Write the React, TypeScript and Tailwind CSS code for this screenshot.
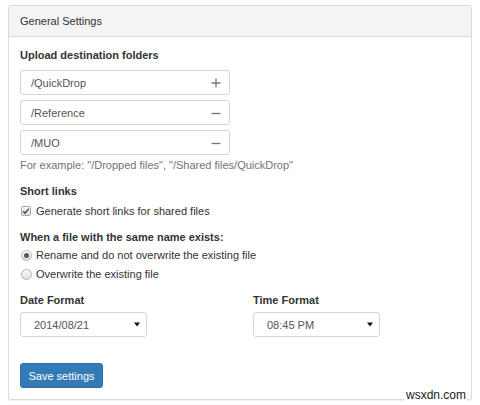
import React from "react";

const font = { fontFamily: '"Liberation Sans", Arial, sans-serif' };

function FolderInput({ value, sign }: { value: string; sign: "+" | "-" }) {
  return (
    <div className="flex h-[25px] w-[210px] items-center justify-between rounded-[3px] border border-[#d6d6d6] bg-white pl-[10px] pr-[8px] text-[11px] text-[#555]">
      <span>{value}</span>
      <svg width="10" height="10" viewBox="0 0 10 10">
        {sign === "+" ? (
          <path d="M5 0.5V9.5M0.5 5H9.5" stroke="#777" strokeWidth="1.3" />
        ) : (
          <path d="M0.5 5.5H9.5" stroke="#777" strokeWidth="1.3" />
        )}
      </svg>
    </div>
  );
}

function Checkbox() {
  return (
    <span className="flex h-[10px] w-[10px] items-center justify-center rounded-[2px] border border-[#a8a8a8] bg-gradient-to-b from-[#fafafa] to-[#e0e0e0]">
      <svg width="8" height="8" viewBox="0 0 8 8">
        <path d="M1.2 4.2L3.1 6.1L6.8 1.6" fill="none" stroke="#444" strokeWidth="1.4" />
      </svg>
    </span>
  );
}

function Radio({ checked }: { checked?: boolean }) {
  return (
    <span className="flex h-[11px] w-[11px] items-center justify-center rounded-full border border-[#b4b4b4] bg-gradient-to-b from-[#fbfbfb] to-[#dedede]">
      {checked && <span className="h-[5px] w-[5px] rounded-full bg-[#555]" />}
    </span>
  );
}

function Select({ value }: { value: string }) {
  return (
    <div className="flex h-[25px] w-[127px] items-center justify-between rounded-[3px] border border-[#d6d6d6] bg-white pl-[13px] pr-[6px] text-[11px] text-[#555]">
      <span>{value}</span>
      <svg width="6" height="5" viewBox="0 0 6 5">
        <path d="M0 0.5H6L3 4.5Z" fill="#111" />
      </svg>
    </div>
  );
}

export default function App() {
  return (
    <div className="relative h-[405px] w-[480px] bg-white pl-[8px] pt-[5px]" style={font}>
      <div className="h-[395px] w-[464px] rounded-[2px] border border-[#dcdcdc] bg-white shadow-[0_1px_1px_rgba(0,0,0,0.05)]">
        <div className="flex h-[31px] items-center border-b border-[#dcdcdc] bg-[#f4f4f4] pl-[11px] text-[11px] text-[#333]">
          General Settings
        </div>
        <div className="flex flex-col px-[11px] pt-[11px] text-[11px] leading-[14px] text-[#333]">
          <div className="font-bold">Upload destination folders</div>
          <div className="mt-[8px] flex flex-col gap-[5px]">
            <FolderInput value="/QuickDrop" sign="+" />
            <FolderInput value="/Reference" sign="-" />
            <FolderInput value="/MUO" sign="-" />
          </div>
          <div className="mt-[3px] text-[#737373]">
            For example: "/Dropped files", "/Shared files/QuickDrop"
          </div>
          <div className="mt-[12px] font-bold">Short links</div>
          <div className="mt-[6px] flex items-center gap-[5px] pl-[1px]">
            <Checkbox />
            <span>Generate short links for shared files</span>
          </div>
          <div className="mt-[12px] font-bold">When a file with the same name exists:</div>
          <div className="mt-[4px] flex items-center gap-[4px] pl-[1px]">
            <Radio checked />
            <span>Rename and do not overwrite the existing file</span>
          </div>
          <div className="mt-[5px] flex items-center gap-[4px] pl-[1px]">
            <Radio />
            <span>Overwrite the existing file</span>
          </div>
          <div className="mt-[12px] flex">
            <div className="w-[233px]">
              <div className="font-bold">Date Format</div>
              <div className="mt-[5px]">
                <Select value="2014/08/21" />
              </div>
            </div>
            <div>
              <div className="font-bold">Time Format</div>
              <div className="mt-[5px]">
                <Select value="08:45 PM" />
              </div>
            </div>
          </div>
          <div className="mt-[26px]">
            <button className="flex h-[25px] w-[83px] items-center justify-center rounded-[3px] border border-[#2e6da4] bg-[#337ab7] text-[11px] text-white">
              Save settings
            </button>
          </div>
        </div>
      </div>
      <div className="absolute left-[405px] top-[388px] bg-white px-[1px] text-[12px] leading-[14px] text-[#222]">
        wsxdn.com
      </div>
    </div>
  );
}
